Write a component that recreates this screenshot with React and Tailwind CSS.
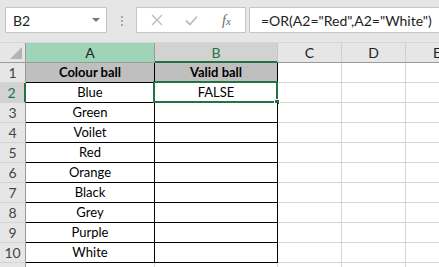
import React from "react";

const rows = [
  ["Colour ball", "Valid ball"],
  ["Blue", "FALSE"],
  ["Green", ""],
  ["Voilet", ""],
  ["Red", ""],
  ["Orange", ""],
  ["Black", ""],
  ["Grey", ""],
  ["Purple", ""],
  ["White", ""],
];

const font = { fontFamily: "Lato, 'Open Sans', sans-serif" };

export default function App() {
  return (
    <div className="w-[439px] h-[267px] overflow-hidden bg-[#e6e6e6] text-[13px] text-black" style={font}>
      {/* Toolbar */}
      <div className="h-[43px] flex items-start pt-[7px] border-b border-[#d6d6d6]">
        <div className="ml-[5px] w-[102px] h-[26px] bg-white border border-[#c6c6c6] flex items-center pl-[7px] pr-[6px] text-[14px] text-[#222]">
          <span>B2</span>
          <span className="ml-auto w-0 h-0 border-l-[4px] border-r-[4px] border-t-[4px] border-l-transparent border-r-transparent border-t-[#777]" />
        </div>
        <div className="ml-[14px] mt-[9px] flex flex-col gap-[2px]">
          <span className="w-[2px] h-[2px] bg-[#a6a6a6]" />
          <span className="w-[2px] h-[2px] bg-[#a6a6a6]" />
          <span className="w-[2px] h-[2px] bg-[#a6a6a6]" />
        </div>
        <div className="ml-[13px] w-[110px] h-[26px] bg-white border border-[#c6c6c6] flex items-center">
          <svg className="ml-[14px]" width="12" height="12" viewBox="0 0 12 12">
            <path d="M1 1 L11 11 M11 1 L1 11" stroke="#bdbdbd" strokeWidth="1.4" fill="none" />
          </svg>
          <svg className="ml-[22px]" width="13" height="11" viewBox="0 0 13 11">
            <path d="M1 5.5 L5 9.5 L12 1.5" stroke="#bdbdbd" strokeWidth="1.8" fill="none" />
          </svg>
          <span className="ml-[24px] text-[14px] italic text-[#6a6a6a]" style={{ fontFamily: "'Liberation Serif', serif" }}>
            f<span className="text-[11px]">x</span>
          </span>
        </div>
        <div className="ml-[3px] flex-1 h-[26px] bg-white border border-[#c6c6c6] border-r-0 flex items-center pl-[11px] text-[14px] text-[#222] whitespace-nowrap">
          =OR(A2="Red",A2="White")
        </div>
      </div>

      {/* Sheet grid */}
      <div className="grid grid-cols-[26px_129px_123px_64px_64px_1fr] auto-rows-[20px]">
        {/* header row */}
        <div className="relative border-r border-b border-[#9b9b9b] bg-[#e6e6e6]">
          <span className="absolute right-[3px] bottom-[3px] w-0 h-0 border-l-[12px] border-t-[12px] border-l-transparent border-t-transparent border-r-0 border-b-0 border-r-transparent" style={{ borderBottom: "12px solid #b4b4b4", borderLeftWidth: 12, borderTopWidth: 0 }} />
        </div>
        <div className="bg-[#9fd5b7] border-r border-b border-[#9b9b9b] flex items-center justify-center text-[14px] text-[#222]">A</div>
        <div className="bg-[#d2d2d2] border-r border-[#c6c6c6] border-b-2 border-b-[#217346] flex items-center justify-center text-[14px] text-[#217346]">B</div>
        <div className="border-r border-b border-r-[#d0d0d0] border-b-[#9b9b9b] flex items-center justify-center text-[14px] text-[#222]">C</div>
        <div className="border-r border-b border-r-[#d0d0d0] border-b-[#9b9b9b] flex items-center justify-center text-[14px] text-[#222]">D</div>
        <div className="border-b border-b-[#9b9b9b] flex items-center pl-[27px] text-[14px] text-[#222]">E</div>

        {rows.map((r, i) => {
          const n = i + 1;
          const sel = n === 2;
          return (
            <React.Fragment key={n}>
              <div
                className={
                  sel
                    ? "bg-[#d2d2d2] border-r-2 border-r-[#217346] border-b border-b-[#d4d4d4] flex items-center justify-center text-[14px] text-[#217346] pr-[1px]"
                    : "bg-[#e6e6e6] border-r border-r-[#9b9b9b] border-b border-b-[#d4d4d4] flex items-center justify-center text-[14px] text-[#444]"
                }
              >
                {n}
              </div>
              <div
                className={
                  (n === 1 ? "bg-[#bfbfbf] font-bold " : "bg-white ") +
                  "border-r border-b border-black flex items-center justify-center pt-[1px]"
                }
              >
                {r[0]}
              </div>
              <div
                className={
                  (n === 1 ? "bg-[#bfbfbf] font-bold " : "bg-white ") +
                  "relative border-r border-b border-black flex items-center justify-center pt-[1px]"
                }
              >
                {r[1]}
                {sel && (
                  <>
                    <span className="absolute -left-[2px] -top-[2px] -right-[1px] -bottom-[1px] border-2 border-[#217346]" />
                    <span className="absolute -right-[3px] -bottom-[3px] w-[6px] h-[6px] bg-[#217346] border border-white" />
                  </>
                )}
              </div>
              <div className="bg-white border-r border-b border-[#d4d4d4]" />
              <div className="bg-white border-r border-b border-[#d4d4d4]" />
              <div className="bg-white border-b border-[#d4d4d4]" />
            </React.Fragment>
          );
        })}
        <div className="bg-[#e6e6e6] border-r border-r-[#9b9b9b]" />
        <div className="bg-white border-r border-[#d4d4d4]" />
        <div className="bg-white border-r border-[#d4d4d4]" />
        <div className="bg-white border-r border-[#d4d4d4]" />
        <div className="bg-white border-r border-[#d4d4d4]" />
        <div className="bg-white" />
      </div>
    </div>
  );
}
